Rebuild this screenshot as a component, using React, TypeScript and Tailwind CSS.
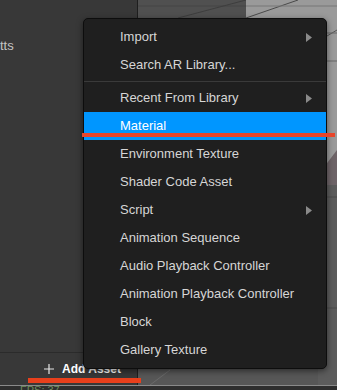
import React from "react";

const Arrow = () => (
  <svg width="6" height="9" viewBox="0 0 6 9" className="shrink-0">
    <path d="M0 0 L6 4.5 L0 9 Z" fill="#8a8a8a" />
  </svg>
);

type Item = { label: string; sub?: boolean; active?: boolean; sep?: boolean };

const items: Item[] = [
  { label: "Import", sub: true },
  { label: "Search AR Library..." },
  { label: "", sep: true },
  { label: "Recent From Library", sub: true },
  { label: "Material", active: true },
  { label: "Environment Texture" },
  { label: "Shader Code Asset" },
  { label: "Script", sub: true },
  { label: "Animation Sequence" },
  { label: "Audio Playback Controller" },
  { label: "Animation Playback Controller" },
  { label: "Block" },
  { label: "Gallery Texture" },
];

export default function App() {
  return (
    <div
      className="relative w-[337px] h-[390px] overflow-hidden bg-[#383838] flex flex-col"
      style={{ fontFamily: '"Liberation Sans", Arial, sans-serif' }}
    >
      <div className="flex flex-1 min-h-0">
        {/* left panel */}
        <div className="w-[138px] shrink-0 flex flex-col bg-[#383838] border-r border-[#1e1e1e]">
          <div className="flex-1 border-b border-[#2b2b2b]">
            <div className="mt-[38px] text-[13px] leading-[16px] text-[#c4c4c4]">tts</div>
          </div>
          <div className="h-[32px] flex items-center pl-[44px] gap-[8px]">
            <svg width="10" height="10" viewBox="0 0 10 10">
              <path d="M5 0 V10 M0 5 H10" stroke="#e6e6e6" strokeWidth="1.2" />
            </svg>
            <span className="text-[12px] font-bold text-white">Add Asset</span>
          </div>
        </div>
        {/* viewport */}
        <div className="flex-1 relative">
          <svg width="199" height="385" viewBox="0 0 199 385" className="block">
            <rect x="0" y="0" width="199" height="385" fill="#575757" />
            <rect x="0" y="0" width="108" height="200" fill="#505050" />
            <rect x="108" y="0" width="91" height="165" fill="#9a9a9a" />
            <polygon points="180,175 199,150 199,185 180,185" fill="#6e6468" />
            <rect x="180" y="185" width="19" height="200" fill="#5c5c5c" />
            <line x1="0" y1="6" x2="108" y2="6" stroke="#444" strokeWidth="1" />
            <line x1="40" y1="18" x2="108" y2="0" stroke="#3e3e3e" strokeWidth="1" />
            <line x1="108" y1="18" x2="160" y2="0" stroke="#4a4a4a" strokeWidth="1" />
            <line x1="108" y1="6" x2="199" y2="6" stroke="#777" strokeWidth="1" />
            <line x1="189" y1="36" x2="199" y2="30" stroke="#555" strokeWidth="1" />
            <line x1="189" y1="33" x2="199" y2="33" stroke="#666" strokeWidth="1" />
            <line x1="189" y1="61" x2="199" y2="61" stroke="#666" strokeWidth="1" />
            <line x1="189" y1="197" x2="199" y2="197" stroke="#4a4a4a" strokeWidth="1" />
            <line x1="189" y1="308" x2="199" y2="308" stroke="#4a4a4a" strokeWidth="1" />
            <line x1="12" y1="385" x2="32" y2="370" stroke="#6a6a6a" strokeWidth="1" />
          </svg>
        </div>
      </div>
      {/* bottom status strip */}
      <div className="h-[5px] shrink-0 bg-[#2e2e2e] border-t border-[#8a8a8a] overflow-hidden">
        <div className="pl-[20px] text-[11px] leading-[8px] text-[#6f8f5f]">FPS: 37</div>
      </div>

      {/* context menu */}
      <div className="absolute left-[83px] top-[18px] w-[244px] rounded-[5px] bg-[#1f1f1f] border border-[#0d0d0d] py-[4px] shadow-[0_2px_6px_rgba(0,0,0,0.5)]">
        {items.map((it, i) =>
          it.sep ? (
            <div key={i} className="h-[5px] flex items-center">
              <div className="h-px w-full bg-[#3a3a3a]" />
            </div>
          ) : (
            <div
              key={i}
              className={`h-[28px] flex items-center justify-between pl-[36px] pr-[14px] text-[13px] ${
                it.active ? "bg-[#0096ff] text-white" : "text-[#d6d6d6]"
              }`}
            >
              <span>{it.label}</span>
              {it.sub && <Arrow />}
            </div>
          )
        )}
      </div>

      {/* annotation underlines */}
      <div className="absolute left-[82px] top-[133px] w-[253px] h-[4px] bg-[#e8452a]" />
      <div className="absolute left-[28px] top-[378px] w-[113px] h-[5px] bg-[#e8401c]" />
    </div>
  );
}
